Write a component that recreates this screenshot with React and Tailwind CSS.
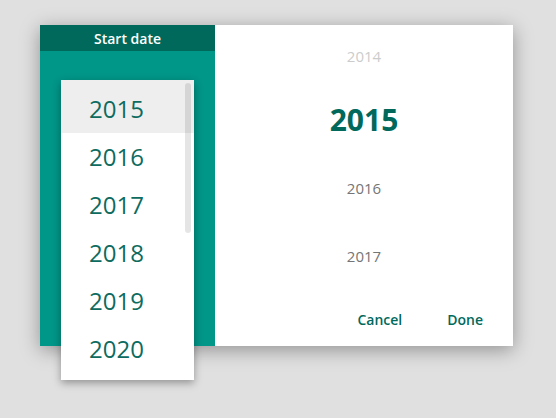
const years = [2015, 2016, 2017, 2018, 2019, 2020];

function YearMenu() {
  return (
    <div className="absolute left-[21px] top-[55px] w-[133px] h-[300px] bg-white shadow-[0_3px_8px_rgba(0,0,0,0.35)] overflow-hidden">
      <div className="flex flex-col">
        {years.map((y, i) => (
          <div
            key={y}
            className={
              i === 0
                ? 'h-[53px] pt-[5px] pl-[28px] flex items-center bg-[#eeeeee] text-[24px] text-[#0d6b5f]'
                : 'h-[48px] pl-[28px] flex items-center text-[24px] text-[#0d6b5f]'
            }
          >
            {y}
          </div>
        ))}
      </div>
      <div className="absolute right-[3px] top-[3px] w-[6px] h-[150px] rounded-full bg-black/10"></div>
    </div>
  );
}

export default function App() {
  return (
    <div
      className="w-[556px] h-[418px] bg-[#e0e0e0] pt-[25px] pl-[40px] overflow-hidden"
      style={{ fontFamily: '"Open Sans", "Noto Sans", sans-serif' }}
    >
      <div className="relative flex w-[473px] h-[321px] shadow-[0_4px_18px_rgba(0,0,0,0.35)]">
        <div className="w-[175px] bg-[#009688]">
          <div className="h-[26px] bg-[#00695c] flex items-center justify-center text-white text-[14px] font-semibold">
            Start date
          </div>
        </div>

        <div className="flex-1 bg-white flex flex-col">
          <div className="h-[62px] flex items-center justify-center text-[15px] text-[#cccccc]">2014</div>
          <div className="h-[64px] flex items-center justify-center text-[30px] font-bold text-[#00695c]">2015</div>
          <div className="h-[74px] flex items-center justify-center text-[15px] text-[#757575]">2016</div>
          <div className="h-[62px] flex items-center justify-center text-[15px] text-[#757575]">2017</div>
          <div className="mt-[14px] h-[36px] flex items-center justify-end pr-[30px] gap-[45px] text-[14px] font-semibold text-[#00695c]">
            <button>Cancel</button>
            <button>Done</button>
          </div>
        </div>

        <YearMenu />
      </div>
    </div>
  );
}
